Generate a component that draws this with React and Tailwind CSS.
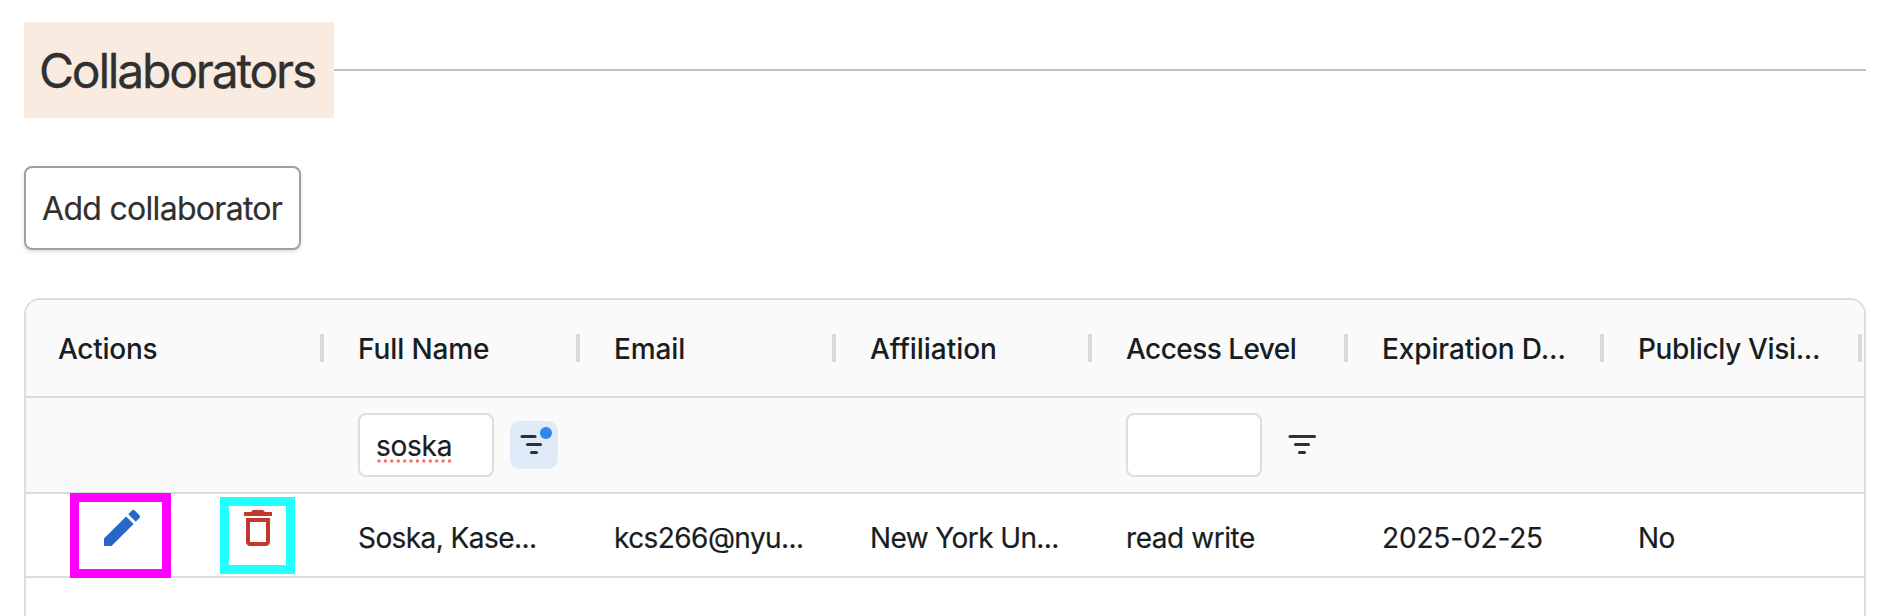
const columns = [
  { label: 'Actions', width: 'w-[300px]', track: 'tracking-[-0.27px]' },
  { label: 'Full Name', width: 'w-[256px]', track: 'tracking-[-0.1px]', value: 'Soska, Kase...', valueTrack: 'tracking-[-0.57px]', filter: 'soska' },
  { label: 'Email', width: 'w-[256px]', track: 'tracking-[-0.1px]', value: 'kcs266@nyu...', valueTrack: 'tracking-[-0.57px]' },
  { label: 'Affiliation', width: 'w-[256px]', track: 'tracking-[-0.05px]', value: 'New York Un...', valueTrack: 'tracking-[-0.6px]' },
  { label: 'Access Level', width: 'w-[256px]', track: 'tracking-[-0.55px]', value: 'read write', valueTrack: 'tracking-[-0.45px]', filter: '' },
  { label: 'Expiration D...', width: 'w-[256px]', track: 'tracking-[-0.13px]', value: '2025-02-25', valueTrack: 'tracking-[-0.15px]' },
  { label: 'Publicly Visi...', width: 'w-[258px]', track: 'tracking-[-0.35px]', value: 'No', valueTrack: 'tracking-[-0.5px]' },
];

function FilterIcon({ active }) {
  return (
    <svg width="48" height="48" viewBox="0 0 48 48" fill="none">
      <g stroke="#2d3133" strokeWidth="3" strokeLinecap="round">
        <path d={active ? 'M12 15.5H25' : 'M12 15.5H36.5'} />
        <path d="M17.5 23.5H30.5" />
        <path d="M21.5 31.5H26.5" />
      </g>
      {active && <circle cx="36" cy="12" r="6" fill="#2f86ee" />}
    </svg>
  );
}

function FloatingFilter({ value }) {
  const active = value !== '';
  return (
    <div className="flex items-center gap-4 pl-8">
      <div className="relative flex h-16 w-[136px] items-center rounded-lg border-2 border-[#dcdddd] bg-white pl-4 pt-0.5 text-[28px] leading-8 tracking-[-0.25px]">
        <span>{value}</span>
        {active && (
          <svg className="absolute left-[17px] top-[44px]" width="76" height="4" viewBox="0 0 76 4">
            <path d="M2 2H73" stroke="#fb6e62" strokeWidth="3.4" strokeLinecap="round" strokeDasharray="0.01 6.4" />
          </svg>
        )}
      </div>
      <div className={active ? 'size-12 rounded-[10px] bg-[#dfeaf8]' : 'size-12'}>
        <FilterIcon active={active} />
      </div>
    </div>
  );
}

function RowActions() {
  return (
    <div className="flex items-start pl-11">
      <div className="-mt-px flex h-[85px] w-[101px] justify-start border-[9px] border-[#ff00ff] pl-[19px] pt-[2px]">
        <svg width="48" height="48" viewBox="0 0 24 24" fill="#2767c9">
          <path d="M3 17.25V21h3.75L17.81 9.94l-3.75-3.75zM20.71 7.04c.39-.39.39-1.02 0-1.41l-2.34-2.34a.996.996 0 0 0-1.41 0l-1.83 1.83 3.75 3.75z" />
        </svg>
      </div>
      <div className="ml-[49px] mt-[3px] flex h-[77px] w-[75px] justify-center border-[9px] border-[#22ffff]">
        <svg className="-mt-[2px] shrink-0" width="48" height="48" viewBox="0 0 24 24" fill="#c3382d">
          <path d="M6 19c0 1.1.9 2 2 2h8c1.1 0 2-.9 2-2V7H6zM8 9h8v10H8zm7.5-5-1-1h-5l-1 1H5v2h14V4z" />
        </svg>
      </div>
    </div>
  );
}

export default function App() {
  return (
    <div className="flex h-[616px] flex-col overflow-hidden bg-white px-6 pt-[22px] font-[Inter,sans-serif] text-[#181d1f]">
      <div className="flex h-24 w-[1842px] shrink-0 items-center">
        <h2 className="flex h-24 w-[310px] items-center whitespace-nowrap bg-[#f9ebe0] pl-[15px] pt-0.5 text-[48px] tracking-[-2.2px] text-[#303030] [-webkit-text-stroke:0.3px_#303030]">
          Collaborators
        </h2>
        <div className="h-0.5 flex-1 bg-[#c2c2c2]" />
      </div>
      <button className="mt-12 flex h-[84px] w-[277px] shrink-0 items-center whitespace-nowrap rounded-lg border-2 border-[#a0a0a0] bg-white pl-4 pt-0.5 text-[32px] tracking-[-0.7px] text-[#303030] shadow-[0_2px_4px_rgba(0,0,0,0.12)] [-webkit-text-stroke:0.2px_#303030]">
        Add collaborator
      </button>
      <div className="mt-12 flex h-[360px] w-[1842px] shrink-0 flex-col overflow-hidden rounded-2xl border-2 border-[#dcdddd]">
        <div className="flex h-[98px] shrink-0 border-b-2 border-[#dadbdb] bg-[#fafafa]">
          {columns.map((c) => (
            <div key={c.label} className={'flex shrink-0 items-center justify-between pl-8 pr-0.5 ' + c.width}>
              <span className={'whitespace-nowrap pt-0.5 text-[28px] font-medium ' + c.track}>{c.label}</span>
              <span className="h-7 w-1 bg-[#d9dada]" />
            </div>
          ))}
        </div>
        <div className="flex h-24 shrink-0 border-b-2 border-[#dadbdb] bg-[#fafafa] [-webkit-text-stroke:0.2px_#181d1f]">
          {columns.map((c) => (
            <div key={c.label} className={'flex shrink-0 items-center ' + c.width}>
              {c.filter !== undefined && <FloatingFilter value={c.filter} />}
            </div>
          ))}
        </div>
        <div className="flex h-[84px] shrink-0 border-b-2 border-[#dcdddd] [-webkit-text-stroke:0.2px_#181d1f]">
          {columns.map((c) => (
            <div key={c.label} className={'shrink-0 ' + c.width}>
              {c.value ? (
                <div className={'flex h-full items-center whitespace-nowrap pl-8 pt-[6px] text-[28px] ' + c.valueTrack}>{c.value}</div>
              ) : (
                <RowActions />
              )}
            </div>
          ))}
        </div>
      </div>
    </div>
  );
}
